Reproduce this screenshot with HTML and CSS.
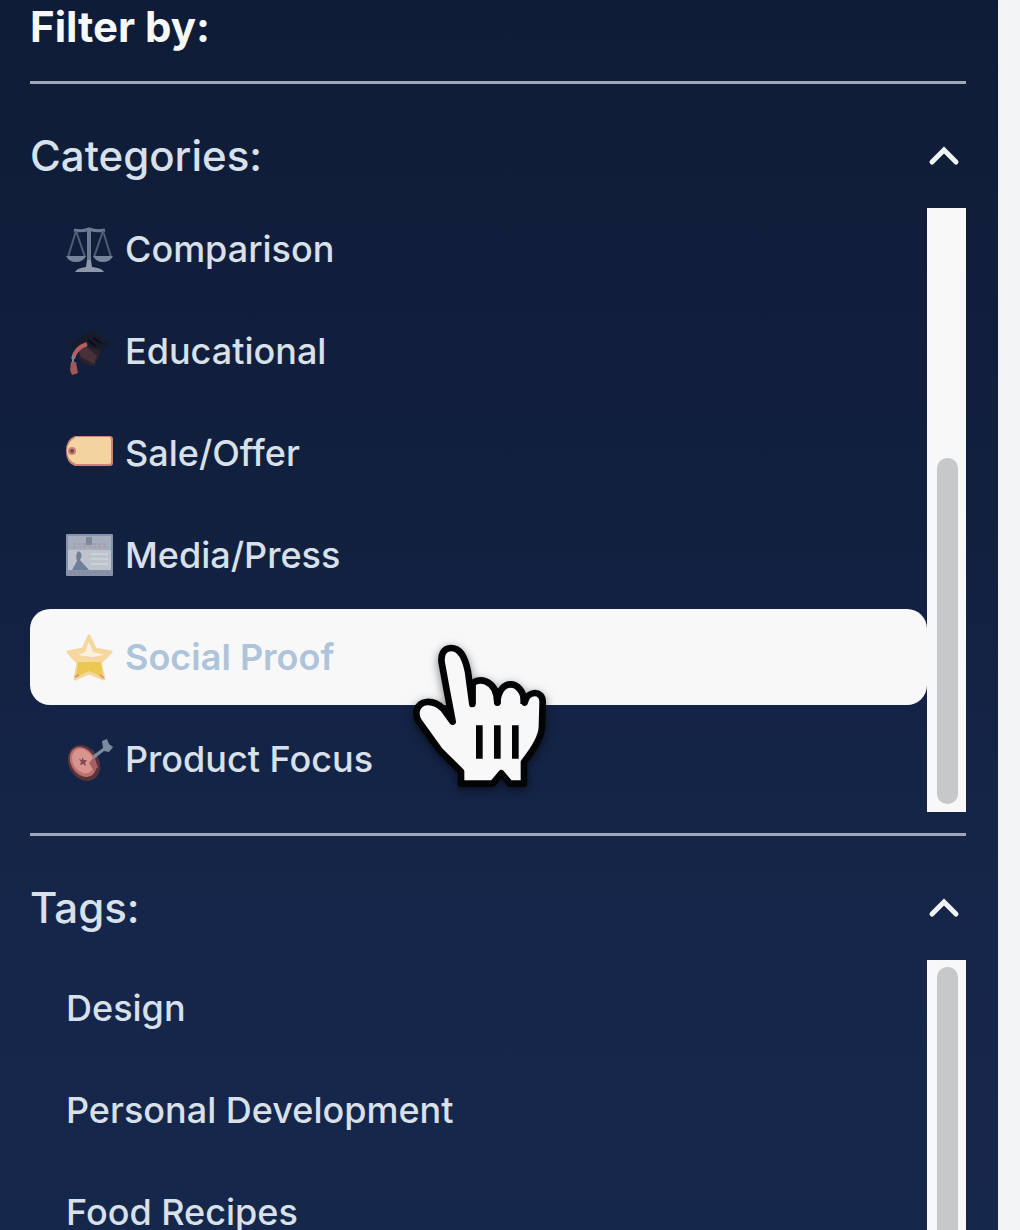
FILE: index.html
```html
<!DOCTYPE html>
<html lang="en">

<head>
  <meta charset="UTF-8" />
  <title>Filters</title>
  <link rel="stylesheet" href="styles.css">
</head>

<body>
  <aside class="sidebar">
    <h2 class="title">Filter by:</h2>

    <!-- Categories -->
    <section class="group">
      <button class="group-header" type="button" aria-expanded="true">
        Categories:
        <svg class="chevron" viewBox="0 0 42 28" aria-hidden="true"><path d="M8 20 L20 8 L32 20" /></svg>
      </button>
      <div class="scroll-area categories">
        <div class="options">
          <button class="option" type="button">
            <svg class="icon" viewBox="0 0 47 47" aria-hidden="true">
              <g fill="none" stroke="#6d7b90" stroke-width="2">
                <path d="M8 4 Q16 6 23 3 Q31 6 39 4" stroke-width="3" />
                <path d="M23 2 V42" stroke-width="4" />
                <path d="M10 5 L2 31 M10 5 L19 31 M37 5 L28 31 M37 5 L45 31" stroke="#4f5e76" />
              </g>
              <path d="M0 30 H20 Q17 36 10 36 Q3 36 0 30 Z M27 30 H47 Q44 36 37 36 Q30 36 27 30 Z" fill="#76849a" />
              <path d="M9 46 Q11 42 20 41 L21 34 H25 L26 41 Q36 42 38 46 Z" fill="#8d99ab" />
            </svg>
            Comparison
          </button>
          <button class="option" type="button">
            <svg class="icon" viewBox="0 0 47 47" aria-hidden="true">
              <path d="M3 17 L25 3 L43 15 L30 29 Z" fill="#171a29" />
              <path d="M14 22 L19 18 L35 22 L29 38 Q19 38 13 31 Z" fill="#2b222e" />
              <path d="M12 22 L19 17 L31 28 L28 36 L15 29 Z" fill="#493039" />
              <path d="M21 16 Q9 20 7 31" fill="none" stroke="#b45f5d" stroke-width="4" />
              <path d="M7 27 V36" stroke="#73839a" stroke-width="2" />
              <path d="M5 34 H10 L12 45 L6 47 L4 42 Z" fill="#a15757" />
              <path d="M27 10 L35 15 M22 12 L30 18" stroke="#080c19" stroke-width="2" />
            </svg>
            Educational
          </button>
          <button class="option" type="button">
            <svg class="icon" viewBox="0 0 47 47" aria-hidden="true">
              <path d="M9 6 H44 Q47 6 47 9 V33 Q47 36 44 36 H9 Q0 33 0 21 Q0 9 9 6 Z" fill="#cb8374" />
              <path d="M10 7 H43 Q45 7 45 10 V32 Q45 34 43 34 H10 Q1 30 1 21 Q1 12 10 7 Z" fill="#f3d4a0" />
              <circle cx="6" cy="21" r="4" fill="#ce8178" />
              <circle cx="6" cy="21" r="2" fill="#75484e" />
            </svg>
            Sale/Offer
          </button>
          <button class="option" type="button">
            <svg class="icon" viewBox="0 0 47 47" aria-hidden="true">
              <rect x="0" y="2" width="47" height="42" rx="1" fill="#8793a8" />
              <rect x="2" y="4" width="43" height="34" fill="#bdc4ce" />
              <path d="M2 4 H45 V18 H2 Z" fill="#a4aebe" />
              <path d="M7 12 H42 M7 15 H42" stroke="#b88c94" stroke-width="1" stroke-dasharray="3 2" />
              <path d="M20 5 H26 V13 H20 Z" fill="#7d899d" />
              <path d="M12 19 Q18 21 14 28 L23 38 H6 L11 29 Q9 24 12 19 Z" fill="#71809a" />
              <path d="M25 22 H42 M25 27 H42 M25 32 H42" stroke="#ccd1d8" stroke-width="2" />
              <path d="M4 41 H43" stroke="#9a7e8d" stroke-width="1" stroke-dasharray="2 2" />
            </svg>
            Media/Press
          </button>
          <button class="option selected" type="button">
            <svg class="icon" viewBox="0 0 47 47" aria-hidden="true">
              <path d="M23 2 L29 15 L45 18 L34 29 L38 45 L23 39 L9 45 L12 29 L2 18 L17 15 Z" fill="#f5d79f" stroke="#f5d79f" stroke-width="3" stroke-linejoin="round" />
              <path d="M12 28 H35 L37 43 L23 37 L10 43 Z" fill="#ecc751" />
              <path d="M23 8 L27 18 L38 21 L26 23 L12 21 L19 18 Z" fill="#fbf2df" />
              <path d="M9 43 L13 41 M34 41 L38 44" stroke="#d99c6e" stroke-width="2" />
            </svg>
            Social Proof
            <svg class="pointer" viewBox="0 0 480 510" aria-hidden="true">
              <path d="M153 54 C130 54 122 74 125 98 L140 180 L158 275 L130 237 Q108 214 80 216 C48 220 42 252 57 275 L118 360 L183 425 V461 H278 L304 430 L330 461 H372 V396 Q425 330 426 290 L428 215 C428 180 382 180 374 218 C368 145 295 145 292 218 C290 142 226 142 217 164 L217 222 L204 125 C194 76 179 54 153 54 Z" />
              <path d="M217 155 V222 M292 175 V222 M371 195 V222 M238 286 V386 M292 286 V386 M346 286 V386" />
            </svg>
          </button>
          <button class="option" type="button">
            <svg class="icon" viewBox="0 0 47 47" aria-hidden="true">
              <ellipse cx="18" cy="27" rx="15" ry="19" transform="rotate(-32 18 27)" fill="#583339" />
              <ellipse cx="17" cy="26" rx="12" ry="16" transform="rotate(-32 17 26)" fill="#bb7170" />
              <ellipse cx="17" cy="25" rx="10" ry="13" transform="rotate(-32 17 25)" fill="#d99490" />
              <path d="M16 21 L18 24 L21 24 L19 27 L20 30 L17 28 L14 29 L15 26 L13 23 L16 24 Z" fill="#804b50" />
              <path d="M23 27 L28 21 L32 31 L28 35 Z" fill="#a65f62" />
              <path d="M26 20 L37 12 L36 5 L41 3 L43 8 L47 11 L43 16 L38 15 L28 23 Z" fill="#7c8aa0" />
            </svg>
            Product Focus
          </button>
        </div>
        <div class="track"><div class="thumb"></div></div>
      </div>
    </section>

    <!-- Tags -->
    <section class="group tags-group">
      <button class="group-header" type="button" aria-expanded="true">
        Tags:
        <svg class="chevron" viewBox="0 0 42 28" aria-hidden="true"><path d="M8 20 L20 8 L32 20" /></svg>
      </button>
      <div class="scroll-area tags">
        <div class="options">
          <button class="option" type="button">Design</button>
          <button class="option" type="button">Personal Development</button>
          <button class="option" type="button">Food Recipes</button>
        </div>
        <div class="track"><div class="thumb"></div></div>
      </div>
    </section>
  </aside>
</body>

</html>
```

FILE: styles.css
```css
:root {
  --page: #f3f4f6;
  --text: #d8e0ea;
  --light: #f8f8f9;
  --thumb: #c7c8ca;
  --line: #a0a8b7;
  --selected: #aec4da;
}

* {
  box-sizing: border-box;
}

body {
  font-family: Inter, sans-serif;
  background: var(--page);
  color: var(--text);
  margin: 0;
  height: 100vh;
  overflow: hidden;
}

button {
  font-family: inherit;
  font-weight: 500;
  color: inherit;
  background: none;
  border: none;
  text-align: left;
  cursor: pointer;
}

.sidebar {
  display: flex;
  flex-direction: column;
  height: 100%;
  margin-right: 22px;
  padding: 0 32px 0 30px;
  background: linear-gradient(180deg, #0e1c37 0%, #12203f 40%, #15264a 75%, #15274b 100%);
}

.title {
  margin: 0;
  padding-bottom: 27px;
  font-size: 42px;
  line-height: 54px;
  color: #f6f8fb;
}

.group {
  border-top: 3px solid var(--line);
}

.group-header {
  display: flex;
  justify-content: space-between;
  align-items: center;
  width: 100%;
  height: 124px;
  padding: 20px 0 0;
  font-size: 42px;
  line-height: 54px;
}

.chevron {
  width: 42px;
  height: 28px;
  fill: none;
  stroke: #f1f4f7;
  stroke-width: 5;
  stroke-linecap: round;
}

.scroll-area {
  display: flex;
}

.categories {
  height: 604px;
  margin-bottom: 21px;
}

.options {
  display: flex;
  flex: 1;
  flex-direction: column;
  gap: 6px;
}

.categories .options {
  justify-content: flex-end;
  padding-bottom: 5px;
}

.option {
  position: relative;
  display: flex;
  flex-shrink: 0;
  align-items: center;
  gap: 12px;
  height: 96px;
  padding: 0 36px;
  border-radius: 20px;
  font-size: 36px;
  line-height: 48px;
}

.option.selected {
  z-index: 1;
  background: var(--light);
  color: var(--selected);
  font-weight: 600;
}

.icon {
  flex-shrink: 0;
  width: 47px;
  height: 47px;
}

/* Hand cursor over the hovered option */
.pointer {
  position: absolute;
  top: 21px;
  left: 370px;
  width: 160px;
  height: 170px;
  fill: var(--light);
  stroke: #030405;
  stroke-width: 20;
  stroke-linejoin: round;
  overflow: visible;
  filter: drop-shadow(0 3px 5px rgba(0, 0, 0, 0.5));
}

.track {
  width: 39px;
  padding: 7px 8px 8px 10px;
  background: var(--light);
}

.thumb {
  height: 100%;
  border-radius: 10px;
  background: var(--thumb);
}

.categories .track {
  padding-top: 250px;
}

.tags-group {
  display: flex;
  flex: 1;
  flex-direction: column;
  min-height: 0;
}

.tags-group .group-header {
  flex-shrink: 0;
}

.tags {
  flex: 1;
  min-height: 0;
}

.tags .track {
  padding-bottom: 0;
}

.tags .thumb {
  border-radius: 10px 10px 0 0;
}
```
